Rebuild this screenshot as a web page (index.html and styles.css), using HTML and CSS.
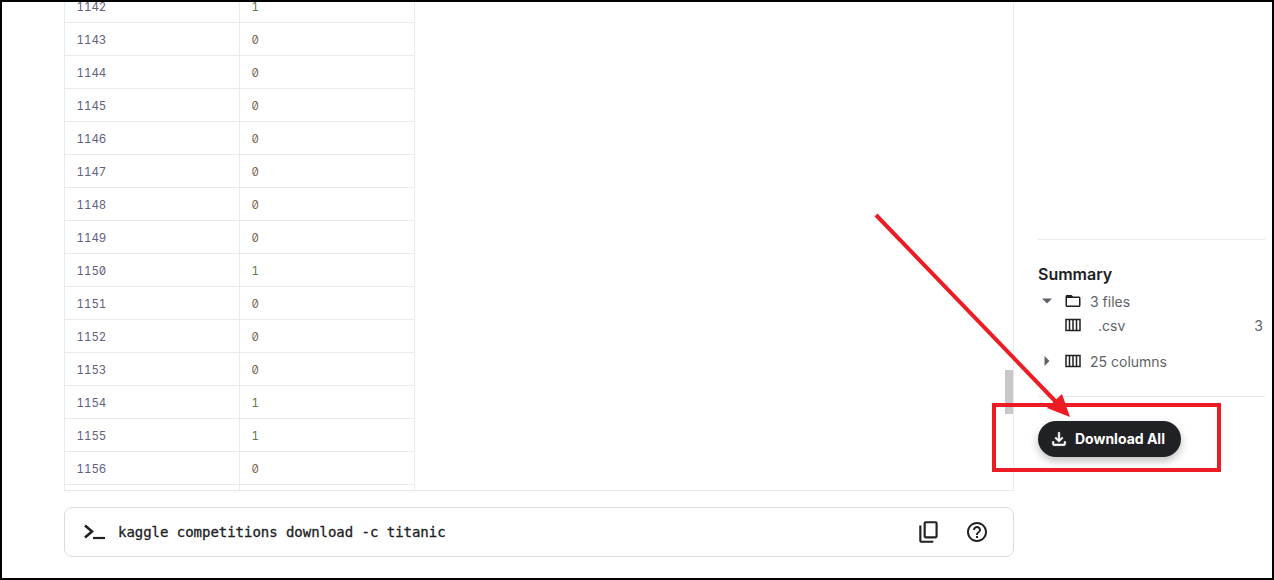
FILE: index.html
```html
<!DOCTYPE html>
<html lang="en">
<head>
  <meta charset="UTF-8" />
  <title>Titanic data</title>
  <link rel="stylesheet" href="styles.css">
</head>
<body>
  <div class="frame">

    <!-- Data table and command line -->
    <div class="main">
      <div class="viewer">
        <table class="data-table">
          <tr><td class="id">1142</td><td class="v-one">1</td></tr>
          <tr><td class="id">1143</td><td class="v-zero">0</td></tr>
          <tr><td class="id">1144</td><td class="v-zero">0</td></tr>
          <tr><td class="id">1145</td><td class="v-zero">0</td></tr>
          <tr><td class="id">1146</td><td class="v-zero">0</td></tr>
          <tr><td class="id">1147</td><td class="v-zero">0</td></tr>
          <tr><td class="id">1148</td><td class="v-zero">0</td></tr>
          <tr><td class="id">1149</td><td class="v-zero">0</td></tr>
          <tr><td class="id">1150</td><td class="v-one">1</td></tr>
          <tr><td class="id">1151</td><td class="v-zero">0</td></tr>
          <tr><td class="id">1152</td><td class="v-zero">0</td></tr>
          <tr><td class="id">1153</td><td class="v-zero">0</td></tr>
          <tr><td class="id">1154</td><td class="v-one">1</td></tr>
          <tr><td class="id">1155</td><td class="v-one">1</td></tr>
          <tr><td class="id">1156</td><td class="v-zero">0</td></tr>
          <tr><td></td><td></td></tr>
        </table>
        <div class="scroll-track"><div class="scroll-thumb"></div></div>
      </div>

      <div class="command">
        <svg class="prompt-icon" viewBox="0 0 22 16" width="22" height="16">
          <path d="M1 1.500 8 7.500 1 13.500" fill="none" stroke="#202124" stroke-width="2.600"/>
          <path d="M9 14h12" fill="none" stroke="#202124" stroke-width="2.200"/>
        </svg>
        <code class="command-text">kaggle competitions download -c titanic</code>
        <svg class="copy-icon" viewBox="0 0 24 24" width="26" height="26">
          <path d="M9 18q-.8 0-1.400-.6T7 16V4q0-.8.6-1.400T9 2h9q.8 0 1.400.6T20 4v12q0 .8-.6 1.400T18 18H9Zm0-2h9V4H9v12Zm-4 6q-.8 0-1.400-.6T3 20V6h2v14h11v2H5Z" fill="#202124"/>
        </svg>
        <svg class="help-icon" viewBox="0 0 24 24" width="24" height="24">
          <path d="M11 18h2v-2h-2v2zm1-16C6.480 2 2 6.480 2 12s4.480 10 10 10 10-4.480 10-10S17.520 2 12 2zm0 18c-4.410 0-8-3.590-8-8s3.590-8 8-8 8 3.590 8 8-3.590 8-8 8zm0-14c-2.210 0-4 1.790-4 4h2c0-1.100.9-2 2-2s2 .9 2 2c0 2-3 1.750-3 5h2c0-2.250 3-2.500 3-5 0-2.210-1.790-4-4-4z" fill="#202124"/>
        </svg>
      </div>
    </div>

    <!-- Summary sidebar -->
    <div class="sidebar">
      <div class="rule"></div>
      <h3 class="summary-title">Summary</h3>

      <div class="summary-row">
        <svg class="caret" viewBox="0 0 10 10" width="10" height="10"><path d="M0 2.500h10L5 7.500z" fill="#5f6368"/></svg>
        <svg class="row-icon row-icon-folder" viewBox="0 0 24 24" width="18" height="18">
          <path d="M20 6h-8l-2-2H4c-1.100 0-2 .9-2 2v12c0 1.100.9 2 2 2h16c1.100 0 2-.9 2-2V8c0-1.100-.9-2-2-2zm0 12H4V8h16v10z" fill="#202124"/>
        </svg>
        <span>3 files</span>
      </div>

      <div class="summary-row">
        <span class="caret-space"></span>
        <svg class="row-icon" viewBox="0 0 16 14" width="16" height="14">
          <path d="M1 1.500h14v11H1zM4.500 1.500v11M8 1.500v11M11.500 1.500v11" fill="none" stroke="#202124" stroke-width="1.500"/>
        </svg>
        <span class="file-ext">.csv</span>
        <span class="file-count">3</span>
      </div>

      <div class="summary-row summary-row-gap">
        <svg class="caret" viewBox="0 0 10 10" width="10" height="10"><path d="M2.500 0v10L7.500 5z" fill="#5f6368"/></svg>
        <svg class="row-icon" viewBox="0 0 16 14" width="16" height="14">
          <path d="M1 1.500h14v11H1zM4.500 1.500v11M8 1.500v11M11.500 1.500v11" fill="none" stroke="#202124" stroke-width="1.500"/>
        </svg>
        <span>25 columns</span>
      </div>

      <div class="rule rule-lower"></div>

      <button class="download-btn">
        <svg viewBox="0 0 24 24" width="20" height="20">
          <path d="M12 16l-5-5 1.400-1.450L11 12.150V4h2v8.150l2.600-2.600L17 11l-5 5Zm-6 4q-.8 0-1.400-.6T4 18v-3h2v3h12v-3h2v3q0 .8-.6 1.400T18 20H6Z" fill="#fff" stroke="#fff" stroke-width=".6"/>
        </svg>
        <span class="download-label">Download All</span>
      </button>
    </div>

    <!-- Red annotation drawn over the page -->
    <svg class="annotation" viewBox="0 0 1274 580" width="1274" height="580">
      <path d="M876 215 1060 406" fill="none" stroke="#ed1c24" stroke-width="4"/>
      <path d="M1070 417 1047 408 1062 394z" fill="#ed1c24"/>
      <rect x="994" y="405" width="225" height="65" fill="none" stroke="#ed1c24" stroke-width="4"/>
    </svg>
  </div>
</body>
</html>
```

FILE: styles.css
```css
/* General page layout and font */
body {
  margin: 0;
  font-family: Inter, "Liberation Sans", sans-serif;
  color: #202124;
  background-color: #000;
}

.frame {
  position: relative;
  box-sizing: border-box;
  display: flex;
  width: 1274px;
  height: 580px;
  border: 2px solid #000;
  background-color: #fff;
  overflow: hidden;
}

/* Left column */
.main {
  width: 950px;
  margin-left: 62px;
  flex-shrink: 0;
}

.viewer {
  position: relative;
  box-sizing: border-box;
  height: 489px;
  border-right: 1px solid #e8eaed;
  border-bottom: 1px solid #e8eaed;
  overflow: hidden;
}

.data-table {
  width: 351px;
  margin-top: -13px;
  border-collapse: collapse;
  table-layout: fixed;
  font-family: Inter, "DejaVu Sans Mono", monospace;
  font-size: 11.5px;
  font-feature-settings: "tnum", "zero";
}

.data-table td {
  box-sizing: border-box;
  height: 33px;
  padding: 1px 12px 0 11.5px;
  border: 1px solid #e8eaed;
}

.id {
  color: #62607c;
}

.v-zero {
  color: #80694f;
}

.v-one {
  color: #5f7a4a;
}

.scroll-track {
  position: absolute;
  top: 368px;
  right: 0;
  width: 8px;
}

.scroll-thumb {
  height: 44px;
  background-color: #c8c8c8;
}

/* Command line box */
.command {
  box-sizing: border-box;
  display: flex;
  align-items: center;
  height: 50px;
  margin-top: 16px;
  padding: 0 24px 0 19px;
  border: 1px solid #dadce0;
  border-radius: 8px;
}

.prompt-icon {
  flex-shrink: 0;
}

.command-text {
  margin-left: 12px;
  font-family: "DejaVu Sans Mono", monospace;
  font-size: 14px;
  letter-spacing: -0.03px;
  -webkit-text-stroke: 0.3px #202124;
  color: #202124;
}

.copy-icon {
  margin-left: auto;
}

.help-icon {
  margin-left: 23px;
}

/* Right column */
.sidebar {
  width: 227px;
  margin-left: 24px;
  padding-top: 237px;
  flex-shrink: 0;
}

.rule {
  height: 1px;
  background-color: #e8eaed;
}

.rule-lower {
  margin-top: 23px;
}

.summary-title {
  margin: 22px 0 3px;
  font-size: 16px;
  line-height: 24px;
  font-weight: 600;
}

.summary-row {
  display: flex;
  align-items: center;
  height: 24px;
  font-size: 14px;
  color: #5f6368;
}

.summary-row-gap {
  margin-top: 12px;
}

.caret {
  width: 10px;
  margin-left: 4px;
  flex-shrink: 0;
}

.caret-space {
  width: 14px;
}

.row-icon {
  margin-left: 13px;
  margin-right: 9px;
  flex-shrink: 0;
}

.row-icon-folder {
  margin-left: 12px;
  margin-right: 8px;
}

.file-ext {
  margin-left: 8px;
}

.file-count {
  margin-left: auto;
  margin-right: 2px;
}

.download-btn {
  display: flex;
  align-items: center;
  gap: 6px;
  height: 36px;
  margin-top: 24px;
  padding: 0 16px 0 11px;
  border: none;
  border-radius: 18px;
  background-color: #202124;
  color: #fff;
  font-family: inherit;
  font-size: 14px;
  font-weight: 700;
  box-shadow: 0 4px 8px rgba(0, 0, 0, 0.25);
}

.download-label {
  margin-bottom: 1px;
}

/* Annotation overlay */
.annotation {
  position: absolute;
  top: -2px;
  left: -2px;
  pointer-events: none;
}
```
